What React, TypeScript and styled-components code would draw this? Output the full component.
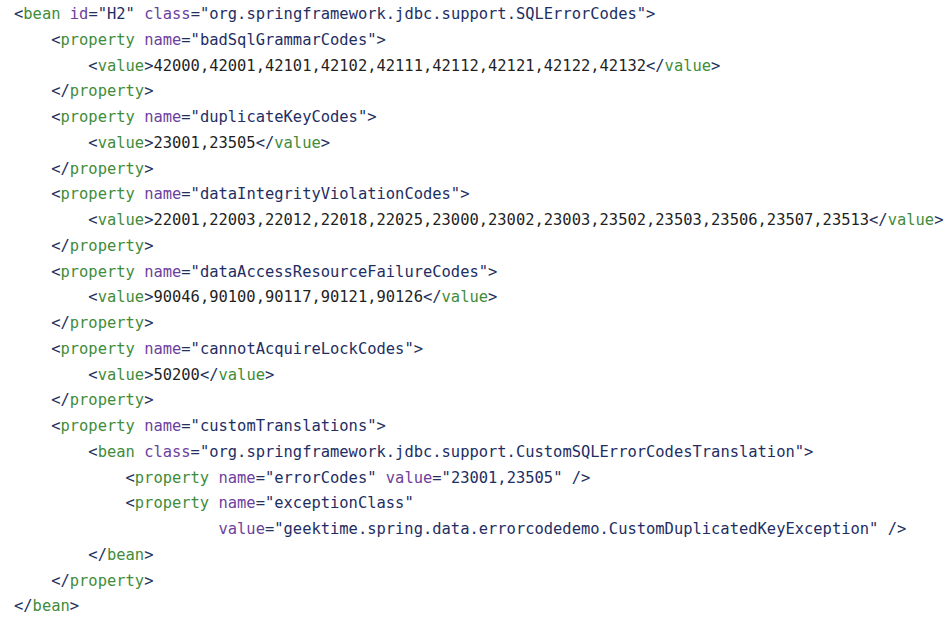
import React from "react";
import styled, { createGlobalStyle } from "styled-components";

const Global = createGlobalStyle`
  html, body { margin: 0; padding: 0; background: #ffffff; }
`;

const Code = styled.div`
  font-family: "DejaVu Sans Mono", "Liberation Mono", monospace;
  font-size: 15.45px;
  line-height: 25.75px;
  padding: 2px 0 0 14px;
  white-space: pre;
  color: #1f1f1f;
  background: #ffffff;
  width: 950px;
  height: 618px;
  box-sizing: border-box;
  overflow: hidden;
`;

const Line = styled.div<{ $indent: number }>`
  padding-left: ${(p) => p.$indent}ch;
`;

const Punct = styled.span`
  color: #23305c;
`;
const Tag = styled.span`
  color: #3f8c3a;
`;
const Attr = styled.span`
  color: #6d3f9e;
`;
const Str = styled.span`
  color: #1e2e63;
`;
const Text = styled.span`
  color: #1f1f1f;
`;

type A = [string, string];

const Open: React.FC<{ name: string; attrs?: A[]; self?: boolean; close?: boolean }> = ({
  name,
  attrs = [],
  self,
  close = true,
}) => (
  <>
    <Punct>&lt;</Punct>
    <Tag>{name}</Tag>
    {attrs.map(([k, v]) => (
      <React.Fragment key={k}>
        {" "}
        <Attr>{k}</Attr>
        <Punct>=</Punct>
        <Str>"{v}"</Str>
      </React.Fragment>
    ))}
    {close && <Punct>{self ? " />" : ">"}</Punct>}
  </>
);

const Close: React.FC<{ name: string }> = ({ name }) => (
  <>
    <Punct>&lt;/</Punct>
    <Tag>{name}</Tag>
    <Punct>&gt;</Punct>
  </>
);

const props: { name: string; values: string }[] = [
  { name: "badSqlGrammarCodes", values: "42000,42001,42101,42102,42111,42112,42121,42122,42132" },
  { name: "duplicateKeyCodes", values: "23001,23505" },
  {
    name: "dataIntegrityViolationCodes",
    values: "22001,22003,22012,22018,22025,23000,23002,23003,23502,23503,23506,23507,23513",
  },
  { name: "dataAccessResourceFailureCodes", values: "90046,90100,90117,90121,90126" },
  { name: "cannotAcquireLockCodes", values: "50200" },
];

export default function App() {
  return (
    <>
      <Global />
      <Code>
        <Line $indent={0}>
          <Open name="bean" attrs={[["id", "H2"], ["class", "org.springframework.jdbc.support.SQLErrorCodes"]]} />
        </Line>
        {props.map((p) => (
          <React.Fragment key={p.name}>
            <Line $indent={4}>
              <Open name="property" attrs={[["name", p.name]]} />
            </Line>
            <Line $indent={8}>
              <Open name="value" />
              <Text>{p.values}</Text>
              <Close name="value" />
            </Line>
            <Line $indent={4}>
              <Close name="property" />
            </Line>
          </React.Fragment>
        ))}
        <Line $indent={4}>
          <Open name="property" attrs={[["name", "customTranslations"]]} />
        </Line>
        <Line $indent={8}>
          <Open name="bean" attrs={[["class", "org.springframework.jdbc.support.CustomSQLErrorCodesTranslation"]]} />
        </Line>
        <Line $indent={12}>
          <Open name="property" attrs={[["name", "errorCodes"], ["value", "23001,23505"]]} self />
        </Line>
        <Line $indent={12}>
          <Open name="property" attrs={[["name", "exceptionClass"]]} close={false} />
        </Line>
        <Line $indent={22}>
          <Attr>value</Attr>
          <Punct>=</Punct>
          <Str>"geektime.spring.data.errorcodedemo.CustomDuplicatedKeyException"</Str>
          <Punct> /&gt;</Punct>
        </Line>
        <Line $indent={8}>
          <Close name="bean" />
        </Line>
        <Line $indent={4}>
          <Close name="property" />
        </Line>
        <Line $indent={0}>
          <Close name="bean" />
        </Line>
      </Code>
    </>
  );
}
